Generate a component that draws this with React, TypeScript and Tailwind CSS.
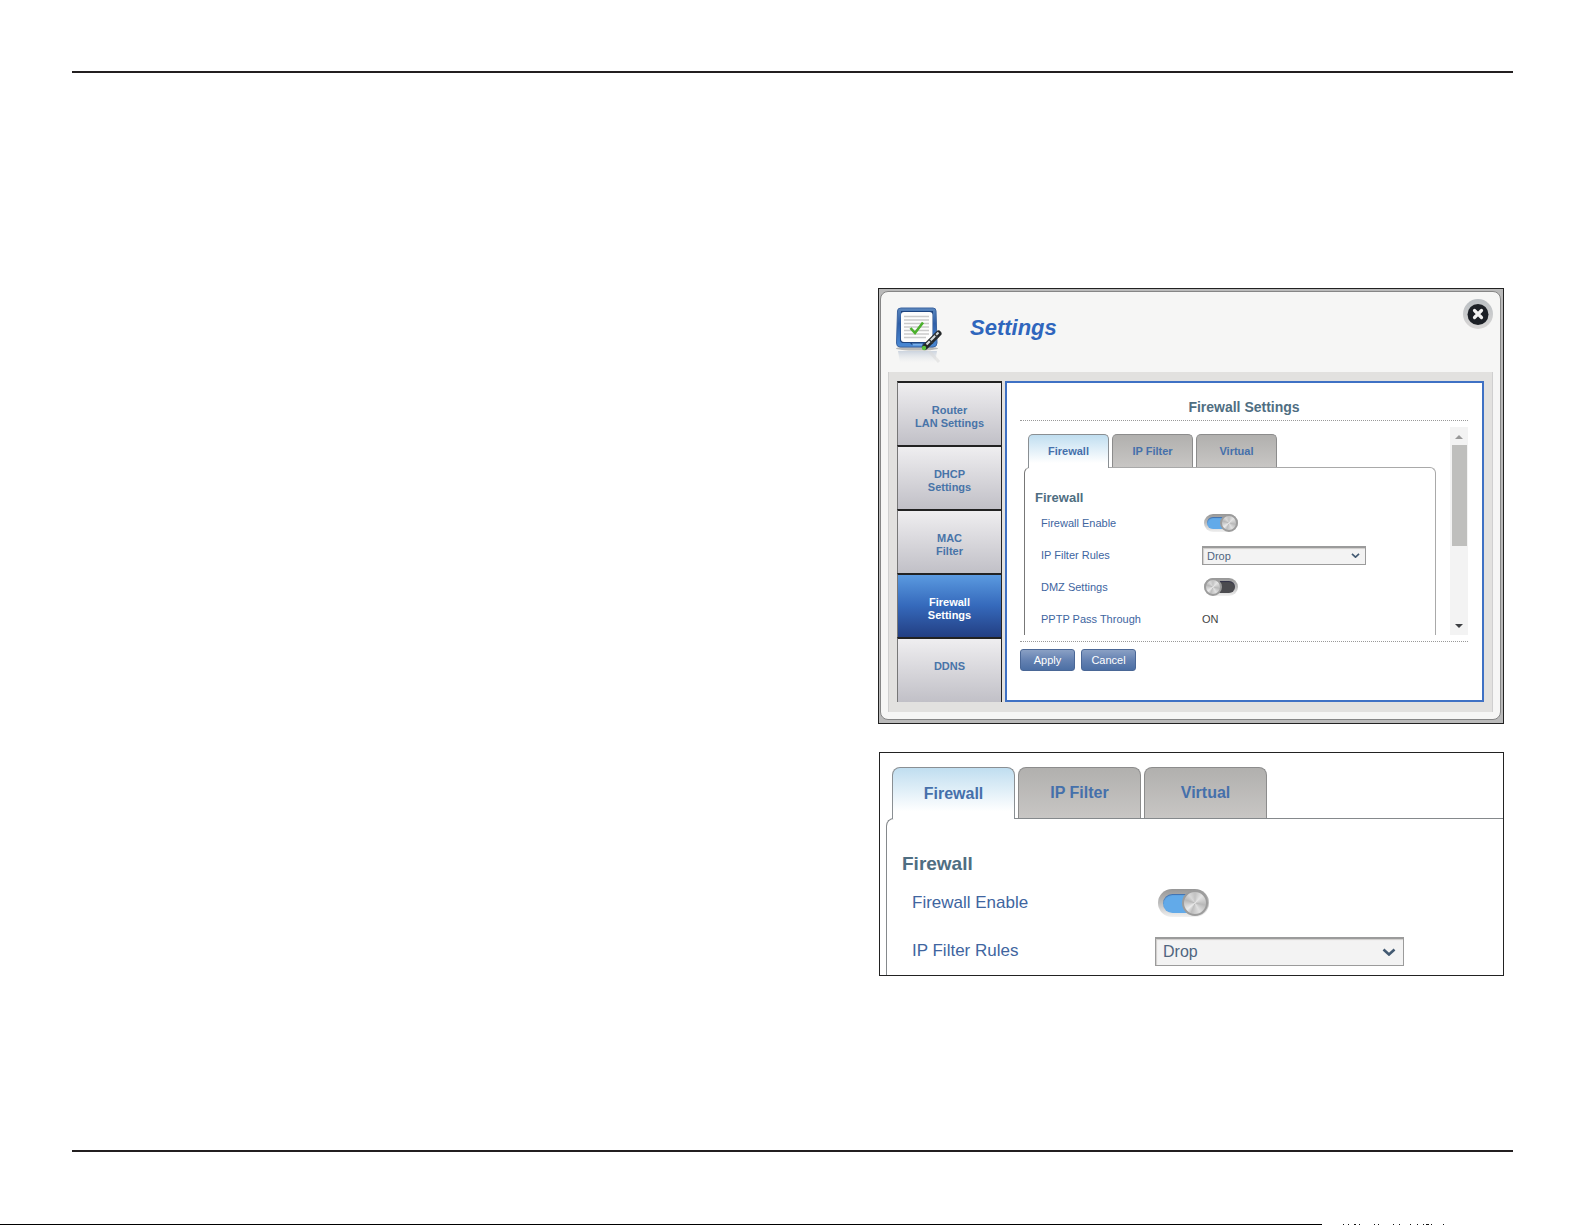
import { useId, useState } from "react";

const navItems = [
  ["Router", "LAN Settings"],
  ["DHCP", "Settings"],
  ["MAC", "Filter"],
  ["Firewall", "Settings"],
  ["DDNS"],
];

const tabs = ["Firewall", "IP Filter", "Virtual"];

function Notepad() {
  return (
    <svg viewBox="0 0 48 58" className="h-[58px] w-12" aria-hidden="true">
      <defs>
        <linearGradient id="frame" x1="0" y1="0" x2="0" y2="1">
          <stop offset="0" stopColor="#5b87bd" />
          <stop offset="0.4" stopColor="#2f5fa8" />
          <stop offset="1" stopColor="#4a8ad6" />
        </linearGradient>
        <linearGradient id="mirror" x1="0" y1="0" x2="0" y2="1">
          <stop offset="0" stopColor="#aebccf" stopOpacity="0.6" />
          <stop offset="1" stopColor="#dfe3e8" stopOpacity="0" />
        </linearGradient>
      </defs>
      <ellipse cx="21" cy="41.500" rx="21" ry="2" fill="#b9b9b7" />
      <path d="M2 44 H41 L39 56 H4 Z" fill="url(#mirror)" />
      <path d="M33 44 L43 55" stroke="#d9d9d9" strokeWidth="3" opacity="0.5" />
      <path d="M5 1 H37 Q40 1 40 4 L41 36 Q41 40 37 40 H4 Q0.500 40 0.500 36 L1.500 4 Q1.500 1 5 1 Z" fill="url(#frame)" stroke="#3c64a0" strokeWidth="1" />
      <path d="M5 4 H37 V34 L35 36 H29 L27 38 H16 L14 36 H6 L4 34 Z" fill="#1d4480" />
      <path d="M16 36.500 H27 L26 38.500 H17 Z" fill="#76aee9" />
      <rect x="5" y="5" width="31.500" height="30" rx="3" fill="#fdfdfd" />
      <path d="M8 9.500H33M8 13H33M8 16.500H33M8 20H33M8 23.500H33M8 27H33M8 30.500H30" stroke="#cacaca" strokeWidth="1.300" />
      <path d="M14.500 21 L19 26 L27 15.500" fill="none" stroke="#4bb02c" strokeWidth="2.600" />
      <path d="M42.500 26.500 L29 40" stroke="#24282a" strokeWidth="6" strokeLinecap="round" />
      <path d="M42.500 25.500 L30.500 37.500" stroke="#d5dadb" strokeWidth="2.200" />
      <path d="M38.500 27 L42 31 M33 32.500 L37 36.500" stroke="#34393b" strokeWidth="1.500" />
      <circle cx="28" cy="41" r="2.200" fill="#58c13c" />
    </svg>
  );
}

function CloseIcon() {
  return (
    <svg viewBox="0 0 30 30" className="h-[30px] w-[30px]" aria-hidden="true">
      <defs>
        <linearGradient id="ring" x1="0" y1="0" x2="0" y2="1">
          <stop offset="0" stopColor="#b9bec2" />
          <stop offset="1" stopColor="#d9d7d6" />
        </linearGradient>
      </defs>
      <circle cx="15" cy="15" r="15" fill="url(#ring)" />
      <circle cx="15" cy="15.500" r="10.500" fill="#1c2026" />
      <path d="M11.500 11.500 L18.500 18.500 M18.500 11.500 L11.500 18.500" stroke="#f2f2f2" strokeWidth="3.200" strokeLinecap="round" />
    </svg>
  );
}

function Toggle({ id, on, large }: { id: string; on: boolean; large?: boolean }) {
  const [checked, setChecked] = useState(on);
  return (
    <input
      id={id}
      type="checkbox"
      role="switch"
      checked={checked}
      onChange={(e) => setChecked(e.target.checked)}
      className={
        (large
          ? "ml-[3px] h-7 w-[51px] before:inset-x-[5px] before:top-[5px] before:bottom-[4px] after:h-[26px] after:w-[26px] after:top-px checked:after:left-6"
          : "ml-0.5 h-[18px] w-[34px] before:inset-x-[3px] before:top-[3px] before:bottom-[3px] after:h-[18px] after:w-[18px] after:top-0 checked:after:left-4") +
        " relative appearance-none rounded-full bg-linear-to-b from-[#979797] via-[#bdbdbd] to-[#f1f1f1] before:absolute before:rounded-full before:bg-[#4b4b4f] checked:before:bg-[#62aae9] before:shadow-[inset_0_1px_1px_rgba(0,0,60,0.35)] after:absolute after:left-0 after:rounded-full after:border-2 after:border-[#9c9c9c] after:bg-[conic-gradient(#c2c2c2,#e4e4e4_12%,#b9b9b9_28%,#e0e0e0_42%,#bdbdbd_56%,#ececec_64%,#b8b8b8_80%,#d8d8d8_90%,#c2c2c2)]"
      }
    />
  );
}

function RuleSelect({ id, large }: { id: string; large?: boolean }) {
  return (
    <div className={large ? "relative h-[29px] w-[249px]" : "relative h-[19px] w-[164px]"}>
      <select
        id={id}
        defaultValue="Drop"
        className={
          (large ? "pl-[7px] text-base" : "pl-1 text-[11px]") +
          " block h-full w-full appearance-none border border-t-2 border-[#9b9b9b] bg-[#f3f3f3] text-[#4f657f] shadow-[inset_1px_1px_1px_#cfcdca]"
        }
      >
        <option>Drop</option>
        <option>Allow</option>
      </select>
      <svg
        viewBox="0 0 14 8"
        className={
          (large ? "right-2 top-[11px] w-[14px]" : "right-1.5 top-[7px] w-[9px]") +
          " pointer-events-none absolute"
        }
        aria-hidden="true"
      >
        <path d="M1.500 1.500 L7 6.500 L12.500 1.500" fill="none" stroke="#435a72" strokeWidth="2.600" />
      </svg>
    </div>
  );
}

function TabBar({ large }: { large?: boolean }) {
  return (
    <div role="tablist" className={large ? "flex gap-[3px] pl-3" : "flex gap-[3px] pl-2"}>
      {tabs.map((tab, i) => (
        <button
          key={tab}
          type="button"
          role="tab"
          aria-selected={i === 0}
          className={
            (large
              ? "w-[123px] rounded-t-lg text-base "
              : "w-[81px] rounded-t-[5px] text-[11px] ") +
            (large ? (i === 0 ? "h-[52px] " : "h-[51px] ") : i === 0 ? "h-[34px] " : "h-[33px] ") +
            (i === 0
              ? "relative -mb-px bg-linear-to-b from-[#c0def0] to-white to-85% border-[#8a8f93]"
              : "bg-linear-to-b from-[#b1b0ae] to-[#c8c6c4] border-[#8c8c8c]") +
            " border border-b-0 font-bold text-[#4570ab]"
          }
        >
          {tab}
        </button>
      ))}
    </div>
  );
}

function SettingsDialog() {
  const id = useId();
  const label = "w-[161px] shrink-0 text-[11px]";
  const row = "flex h-8 items-center text-[#40659f]";
  return (
    <section className="w-full border border-[#222] bg-[#bababa] pt-0.5 pr-0.5 pb-[3px] pl-px">
      <div className="rounded-lg border border-[#868686] bg-[#f6f6f5] px-[7px] pb-[7px]">
        <header className="flex h-20 items-start">
          <div className="mt-[15px] ml-2">
            <Notepad />
          </div>
          <h1 className="mt-[22px] ml-[26px] text-[22px] leading-7 font-bold text-[#2f66bd] italic">Settings</h1>
          <button type="button" aria-label="Close" className="mt-[7px] ml-auto">
            <CloseIcon />
          </button>
        </header>
        <div className="flex gap-[3px] border-x border-[#cfcfcf] bg-[#e2e1df] px-2 pt-[9px] pb-2.5">
          <nav className="flex w-[105px] shrink-0 flex-col">
            {navItems.map((lines, i) => (
              <button
                key={lines.join(" ")}
                type="button"
                className={
                  (i === 3
                    ? "bg-linear-to-b from-[#5b9ae0] via-[#3569bb] to-[#233f83] text-white"
                    : "bg-linear-to-b from-[#efeef0] to-[#c1c0c7] text-[#4874a8]") +
                  " flex h-16 flex-col items-center border-t-2 border-r border-l border-t-[#222] border-r-[#222] border-l-[#777] pt-[21px] text-[11px] leading-[13px] font-bold last:h-[65px] "
                }
              >
                {lines.map((line) => (
                  <span key={line}>{line}</span>
                ))}
              </button>
            ))}
          </nav>
          <div className="min-w-0 flex-1 border-2 border-[#3f71c4] bg-white pr-3.5 pb-[29px] pl-[13px]">
            <h2 className="border-b border-dotted border-[#999] pt-3.5 pb-[3px] text-center text-sm leading-5 font-bold text-[#4f6e82]">
              Firewall Settings
            </h2>
            <div className="mt-1.5 flex h-[208px]">
              <div className="min-w-0 flex-1 overflow-hidden pt-[7px] pr-3.5">
                <TabBar />
                <div role="tabpanel" className="ml-1 h-48 rounded-t-md border border-b-0 border-[#a9a9a9] border-l-[#777] pt-[22px] pl-2.5">
                  <h3 className="mb-px text-[13px] leading-4 font-bold text-[#4f6e82]">Firewall</h3>
                  <div className="pl-1.5">
                    <div className={row}>
                      <label htmlFor={id + "fw"} className={label}>Firewall Enable</label>
                      <Toggle id={id + "fw"} on />
                    </div>
                    <div className={row}>
                      <label htmlFor={id + "ip"} className={label}>IP Filter Rules</label>
                      <RuleSelect id={id + "ip"} />
                    </div>
                    <div className={row}>
                      <label htmlFor={id + "dmz"} className={label}>DMZ Settings</label>
                      <Toggle id={id + "dmz"} on={false} />
                    </div>
                    <div className={row}>
                      <span className={label}>PPTP Pass Through</span>
                      <span className="text-[11px] text-[#444]">ON</span>
                    </div>
                  </div>
                </div>
              </div>
              <div className="flex w-[18px] flex-col items-center bg-[#f3f3f3]">
                <svg viewBox="0 0 18 18" className="h-[18px] w-[18px]" aria-hidden="true">
                  <path d="M5 12 L9 8 L13 12 Z" fill="#999" />
                </svg>
                <div className="h-[101px] w-[15px] bg-[#bfbfbd]" />
                <svg viewBox="0 0 18 18" className="mt-auto h-[18px] w-[18px]" aria-hidden="true">
                  <path d="M5 7 L9 11 L13 7 Z" fill="#3d3f42" />
                </svg>
              </div>
            </div>
            <div className="mt-1.5 flex gap-1.5 border-t border-dotted border-[#999] pt-[7px]">
              {["Apply", "Cancel"].map((text) => (
                <button
                  key={text}
                  type="button"
                  className="h-[22px] w-[55px] rounded-[3px] border border-[#4a6796] bg-linear-to-b from-[#8aa0c4] via-[#6582b2] to-[#4c6fa4] text-[11px] text-white"
                >
                  {text}
                </button>
              ))}
            </div>
          </div>
        </div>
      </div>
    </section>
  );
}

function FirewallDetail() {
  const id = useId();
  const label = "w-[243px] shrink-0 text-[17px]";
  return (
    <section className="w-full max-w-[625px] self-end overflow-hidden border border-[#222] pt-3.5">
      <TabBar large />
      <div role="tabpanel" className="ml-1.5 rounded-tl-lg border-t border-l border-[#85898c] pt-[33px] pl-[15px]">
        <h3 className="mb-[3px] text-[19px] leading-6 font-bold text-[#4f6e82]">Firewall</h3>
        <div className="pl-2.5 text-[#40659f]">
          <div className="flex h-12 items-center">
            <label htmlFor={id + "fw"} className={label}>Firewall Enable</label>
            <Toggle id={id + "fw"} on large />
          </div>
          <div className="flex h-12 items-center">
            <label htmlFor={id + "ip"} className={label}>IP Filter Rules</label>
            <RuleSelect id={id + "ip"} large />
          </div>
        </div>
      </div>
    </section>
  );
}

function EdgeMarks() {
  return (
    <svg viewBox="0 0 105 1" className="ml-[21px] h-px w-[105px]" shapeRendering="crispEdges" aria-hidden="true">
      <path d="M0 .5h1M5 .5h1M11 .5h2M16 .5h1M31 .5h1M35 .5h1M50 .5h1M56 .5h1M67 .5h1M74 .5h1M80 .5h1M83 .5h3M88 .5h1M100 .5h1" stroke="#111" />
    </svg>
  );
}

export default function App() {
  return (
    <div className="flex min-h-screen flex-col bg-white pt-[71px] font-['Liberation_Sans',Arial,sans-serif]">
      <hr className="mx-[72px] border-t-2 border-[#231f20]" />
      <main className="mt-[215px] mr-[81px] mb-10 ml-auto flex w-full max-w-[626px] flex-col gap-7">
        <SettingsDialog />
        <FirewallDetail />
      </main>
      <footer className="mt-auto">
        <hr className="mx-[72px] mb-[72px] border-t-2 border-[#231f20]" />
        <div className="flex">
          <div className="h-px w-[83.4%] bg-black" />
          <EdgeMarks />
        </div>
      </footer>
    </div>
  );
}
